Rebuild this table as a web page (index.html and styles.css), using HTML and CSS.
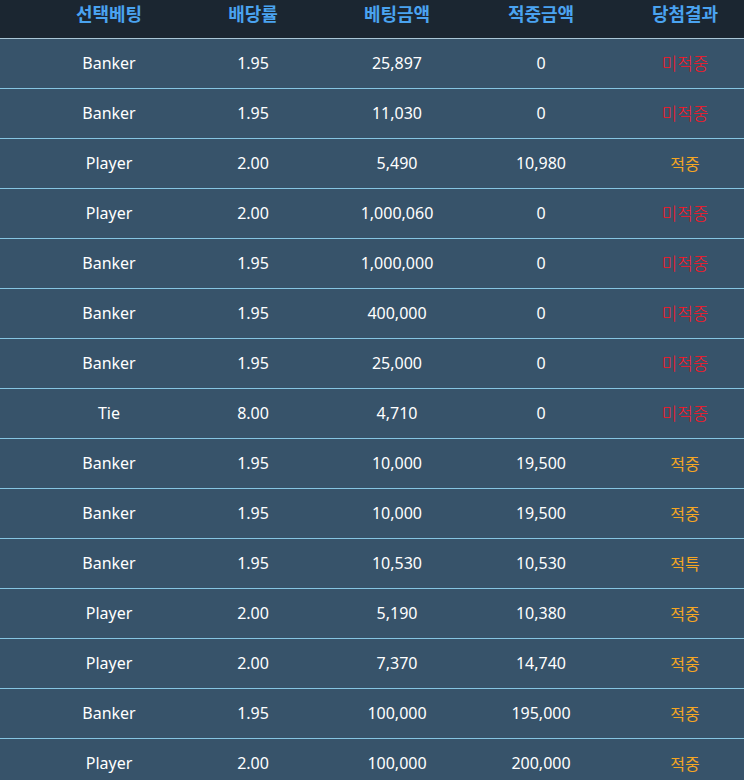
FILE: index.html
```html
<!DOCTYPE html>
<html lang="ko">
<head>
  <meta charset="UTF-8">
  <meta name="viewport" content="width=device-width, initial-scale=1.0">
  <title>베팅내역</title>
  <link rel="stylesheet" href="styles.css">
</head>
<body>
  <div class="bet-table">
    <!-- 헤더 -->
    <div class="row head">
      <span></span>
      <span>선택베팅</span>
      <span>배당률</span>
      <span>베팅금액</span>
      <span>적중금액</span>
      <span>당첨결과</span>
    </div>

    <div class="row"><span></span><span>Banker</span><span>1.95</span><span>25,897</span><span>0</span><span class="lose">미적중</span></div>
    <div class="row"><span></span><span>Banker</span><span>1.95</span><span>11,030</span><span>0</span><span class="lose">미적중</span></div>
    <div class="row"><span></span><span>Player</span><span>2.00</span><span>5,490</span><span>10,980</span><span class="win">적중</span></div>
    <div class="row"><span></span><span>Player</span><span>2.00</span><span>1,000,060</span><span>0</span><span class="lose">미적중</span></div>
    <div class="row"><span></span><span>Banker</span><span>1.95</span><span>1,000,000</span><span>0</span><span class="lose">미적중</span></div>
    <div class="row"><span></span><span>Banker</span><span>1.95</span><span>400,000</span><span>0</span><span class="lose">미적중</span></div>
    <div class="row"><span></span><span>Banker</span><span>1.95</span><span>25,000</span><span>0</span><span class="lose">미적중</span></div>
    <div class="row"><span></span><span>Tie</span><span>8.00</span><span>4,710</span><span>0</span><span class="lose">미적중</span></div>
    <div class="row"><span></span><span>Banker</span><span>1.95</span><span>10,000</span><span>19,500</span><span class="win">적중</span></div>
    <div class="row"><span></span><span>Banker</span><span>1.95</span><span>10,000</span><span>19,500</span><span class="win">적중</span></div>
    <div class="row"><span></span><span>Banker</span><span>1.95</span><span>10,530</span><span>10,530</span><span class="win">적특</span></div>
    <div class="row"><span></span><span>Player</span><span>2.00</span><span>5,190</span><span>10,380</span><span class="win">적중</span></div>
    <div class="row"><span></span><span>Player</span><span>2.00</span><span>7,370</span><span>14,740</span><span class="win">적중</span></div>
    <div class="row"><span></span><span>Banker</span><span>1.95</span><span>100,000</span><span>195,000</span><span class="win">적중</span></div>
    <div class="row"><span></span><span>Player</span><span>2.00</span><span>100,000</span><span>200,000</span><span class="win">적중</span></div>
  </div>
</body>
</html>
```

FILE: styles.css
```css
* {
  margin: 0;
  padding: 0;
  box-sizing: border-box;
}

body {
  font-family: "Noto Sans", "Noto Sans CJK KR", sans-serif;
  background-color: #37536a;
  overflow-x: hidden;
}

.bet-table {
  width: 757px;
}

.row {
  display: grid;
  grid-template-columns: 37px repeat(5, 144px);
  align-items: center;
  height: 50px;
  padding-bottom: 2px;
  background-color: #37536a;
  border-bottom: 1px solid #86c5e2;
  color: #ffffff;
  font-size: 16px;
  text-align: center;
}

.row span {
  line-height: 22px;
}

.row.head {
  height: 39px;
  align-items: start;
  padding-top: 2px;
  padding-bottom: 0;
  background-color: #1b2631;
  border-bottom: 1px solid #a9c6d6;
  color: #4aa3f0;
  font-size: 18px;
  font-weight: bold;
  font-family: "Noto Sans CJK KR", sans-serif;
}

.win {
  color: #f5a623;
  font-family: "Noto Sans CJK KR", sans-serif;
}

.lose {
  color: #ff1424;
  font-family: "Noto Sans CJK KR", sans-serif;
  font-size: 17px;
  font-weight: 300;
}
```
